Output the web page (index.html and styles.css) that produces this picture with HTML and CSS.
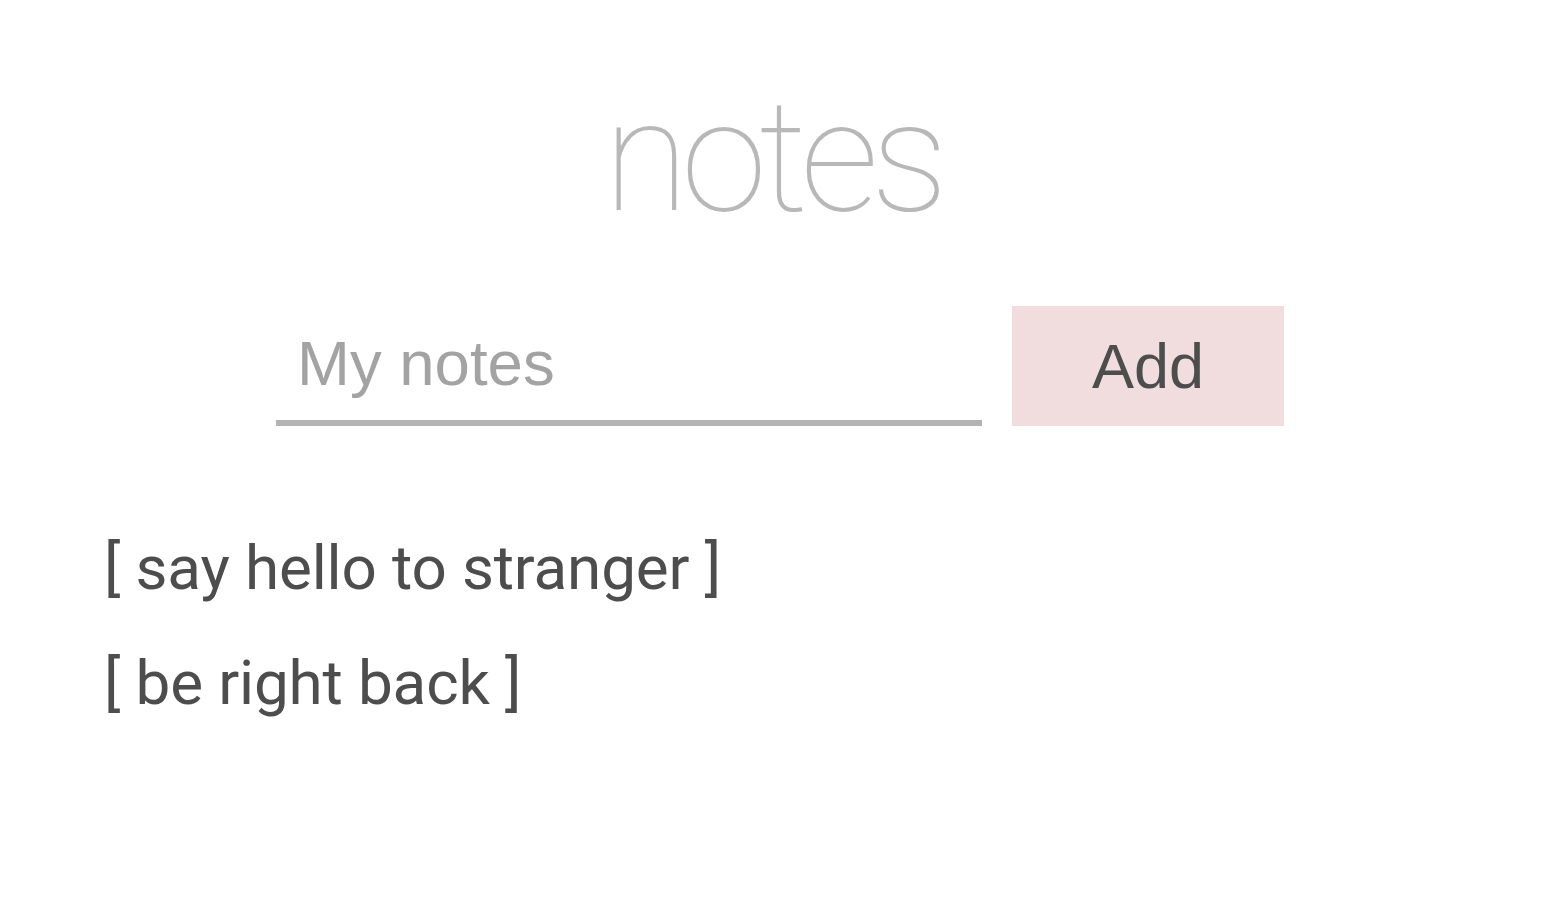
FILE: index.html
```html
<!DOCTYPE html>
<html lang="en">
<head>
<meta charset="utf-8">
<title>notes</title>
<link rel="stylesheet" href="styles.css">
</head>
<body>
<main class="app">
  <h1 class="title">notes</h1>
  <form class="note-form">
    <input class="note-input" type="text" placeholder="My notes" autofocus>
    <button class="add-btn" type="button">Add</button>
  </form>
  <ul class="note-list">
    <li class="note">[ say hello to stranger ]</li>
    <li class="note">[ be right back ]</li>
  </ul>
</main>
</body>
</html>
```

FILE: styles.css
```css
html, body {
  margin: 0;
  padding: 0;
  background: #ffffff;
}

body {
  font-family: "Liberation Sans", Arial, sans-serif;
  color: #4d4d4d;
}

.app {
  display: flex;
  flex-direction: column;
}

.title {
  margin: 79px 0 0;
  padding-right: 12px;
  text-align: center;
  font-family: Roboto, "Liberation Sans", sans-serif;
  font-weight: 100;
  font-size: 156px;
  line-height: 1;
  letter-spacing: -8px;
  color: #b8b8b8;
}

.note-form {
  display: flex;
  justify-content: center;
  gap: 30px;
  margin: 71px 0 0;
  padding-left: 4px;
}

.note-input {
  box-sizing: border-box;
  width: 706px;
  height: 120px;
  padding: 0 0 0 21px;
  border: none;
  border-bottom: 6px solid #b3b3b3;
  border-radius: 0;
  outline: none;
  background: transparent;
  font-family: "Liberation Sans", Arial, sans-serif;
  font-size: 63.5px;
  color: #4d4d4d;
  caret-color: #333333;
}

.note-input::placeholder {
  color: #a3a3a3;
}

.add-btn {
  box-sizing: border-box;
  width: 272px;
  height: 120px;
  padding: 0;
  border: none;
  border-radius: 0;
  background: #f1dddd;
  font-family: "Liberation Sans", Arial, sans-serif;
  font-size: 63px;
  color: #4d4d4d;
  cursor: pointer;
}

.note-list {
  list-style: none;
  margin: 84px 0 0;
  padding: 0 0 0 104px;
}

.note {
  font-family: Roboto, "Liberation Sans", sans-serif;
  font-size: 62px;
  line-height: 115px;
  letter-spacing: -0.15px;
  color: #4d4d4d;
}
```
